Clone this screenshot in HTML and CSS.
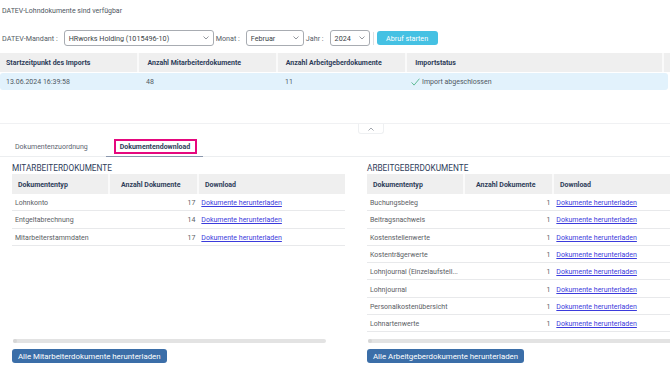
FILE: index.html
```html
<!DOCTYPE html>
<html lang="de">
<head>
<meta charset="utf-8">
<title>DATEV-Lohndokumente</title>
<link rel="stylesheet" href="styles.css">
</head>
<body>
<div class="page">
  <p class="notice">DATEV-Lohndokumente sind verfügbar</p>

  <div class="filters">
    <span class="label">DATEV-Mandant :</span>
    <div class="select select-mandant"><span>HRworks Holding (1015496-10)</span><svg class="chev" viewBox="0 0 6 4"><polyline points="0.5,0.5 3,3 5.5,0.5"/></svg></div>
    <span class="label">Monat :</span>
    <div class="select select-month"><span>Februar</span><svg class="chev" viewBox="0 0 6 4"><polyline points="0.5,0.5 3,3 5.5,0.5"/></svg></div>
    <span class="label">Jahr :</span>
    <div class="select select-year"><span>2024</span><svg class="chev" viewBox="0 0 6 4"><polyline points="0.5,0.5 3,3 5.5,0.5"/></svg></div>
    <span class="divider"></span>
    <button class="btn-fetch">Abruf starten</button>
  </div>

  <div class="import-table">
    <div class="import-row import-head">
      <div class="c c1">Startzeitpunkt des Imports</div>
      <div class="c c2">Anzahl Mitarbeiterdokumente</div>
      <div class="c c3">Anzahl Arbeitgeberdokumente</div>
      <div class="c c4">Importstatus</div>
      <div class="c c5"></div>
    </div>
    <div class="import-row import-data">
      <div class="c c1">13.06.2024 16:39:58</div>
      <div class="c c2">48</div>
      <div class="c c3">11</div>
      <div class="c c4"><svg class="check" viewBox="0 0 10 9"><polyline points="0.6,5 3.4,8 9.4,0.8"/></svg>Import abgeschlossen</div>
    </div>
  </div>

  <div class="collapse-bar">
    <span class="handle"><svg viewBox="0 0 6 4"><polyline points="0.5,3.5 3,1 5.5,3.5"/></svg></span>
  </div>

  <div class="tabs">
    <div class="tab">Dokumentenzuordnung</div>
    <div class="tab tab-active"><span class="focus">Dokumentendownload</span></div>
  </div>

  <div class="panels">
    <section class="panel">
      <h3 class="panel-title">MITARBEITERDOKUMENTE</h3>
      <div class="doc-table">
        <div class="doc-head">
          <div class="d1">Dokumententyp</div>
          <div class="d2">Anzahl Dokumente</div>
          <div class="d3">Download</div>
        </div>
        <div class="doc-body">
          <div class="doc-row"><div class="d1">Lohnkonto</div><div class="d2">17</div><div class="d3"><a href="#">Dokumente herunterladen</a></div></div>
          <div class="doc-row"><div class="d1">Entgeltabrechnung</div><div class="d2">14</div><div class="d3"><a href="#">Dokumente herunterladen</a></div></div>
          <div class="doc-row"><div class="d1">Mitarbeiterstammdaten</div><div class="d2">17</div><div class="d3"><a href="#">Dokumente herunterladen</a></div></div>
        </div>
      </div>
      <div class="scrollbar"><span class="thumb"></span></div>
      <button class="btn-all">Alle Mitarbeiterdokumente herunterladen</button>
    </section>

    <section class="panel">
      <h3 class="panel-title">ARBEITGEBERDOKUMENTE</h3>
      <div class="doc-table">
        <div class="doc-head">
          <div class="d1">Dokumententyp</div>
          <div class="d2">Anzahl Dokumente</div>
          <div class="d3">Download</div>
        </div>
        <div class="doc-body">
          <div class="doc-row"><div class="d1">Buchungsbeleg</div><div class="d2">1</div><div class="d3"><a href="#">Dokumente herunterladen</a></div></div>
          <div class="doc-row"><div class="d1">Beitragsnachweis</div><div class="d2">1</div><div class="d3"><a href="#">Dokumente herunterladen</a></div></div>
          <div class="doc-row"><div class="d1">Kostenstellenwerte</div><div class="d2">1</div><div class="d3"><a href="#">Dokumente herunterladen</a></div></div>
          <div class="doc-row"><div class="d1">Kostenträgerwerte</div><div class="d2">1</div><div class="d3"><a href="#">Dokumente herunterladen</a></div></div>
          <div class="doc-row"><div class="d1">Lohnjournal (Einzelaufstell...</div><div class="d2">1</div><div class="d3"><a href="#">Dokumente herunterladen</a></div></div>
          <div class="doc-row"><div class="d1">Lohnjournal</div><div class="d2">1</div><div class="d3"><a href="#">Dokumente herunterladen</a></div></div>
          <div class="doc-row"><div class="d1">Personalkostenübersicht</div><div class="d2">1</div><div class="d3"><a href="#">Dokumente herunterladen</a></div></div>
          <div class="doc-row"><div class="d1">Lohnartenwerte</div><div class="d2">1</div><div class="d3"><a href="#">Dokumente herunterladen</a></div></div>
        </div>
      </div>
      <div class="scrollbar"><span class="thumb"></span></div>
      <button class="btn-all">Alle Arbeitgeberdokumente herunterladen</button>
    </section>
  </div>
</div>
</body>
</html>
```

FILE: styles.css
```css
html, body {
  margin: 0;
  padding: 0;
  background: #ffffff;
  overflow: hidden;
}
body {
  width: 670px;
  height: 367px;
  font-family: Roboto, "Liberation Sans", sans-serif;
  font-size: 7px;
  color: #555a60;
}
.page {
  display: flex;
  flex-direction: column;
}

/* notice */
.notice {
  margin: 6px 0 0 2px;
  line-height: 10px;
  font-size: 7px;
  color: #4d5660;
}

/* filters */
.filters {
  display: flex;
  align-items: center;
  margin: 14px 0 0 2px;
  height: 16px;
}
.label {
  font-size: 7.2px;
  color: #555c66;
  margin-right: 6px;
}
.select {
  box-sizing: border-box;
  height: 16px;
  border: 1px solid #a8acb2;
  border-radius: 3px;
  display: flex;
  align-items: center;
  justify-content: space-between;
  padding: 0 4px 0 4px;
  font-size: 7.2px;
  color: #3a3f46;
  margin-right: 2px;
}
.select-mandant { width: 150px; }
.select-month { width: 58px; }
.select-year { width: 40px; }
.chev {
  width: 6px;
  height: 4px;
  fill: none;
  stroke: #7a7f86;
  stroke-width: 0.8;
}
.divider {
  width: 1px;
  height: 13px;
  background: #dcdfe3;
  margin: 0 3px 0 1px;
}
.btn-fetch {
  box-sizing: border-box;
  height: 14px;
  width: 61px;
  border: none;
  border-radius: 3px;
  background: #45c1e3;
  color: #ffffff;
  font-family: Roboto, "Liberation Sans", sans-serif;
  font-size: 7.2px;
  padding: 0;
}

/* import table */
.import-table {
  margin-top: 7px;
}
.import-row {
  display: flex;
}
.import-head {
  height: 19px;
  font-weight: 700;
  color: #2e3d5a;
}
.import-head .c {
  background: #efefef;
  border-left: 2px solid #fafafa;
}
.import-head .c1 { border-left: none; }
.c {
  box-sizing: border-box;
  display: flex;
  align-items: center;
  padding-left: 6px;
}
.c1 { width: 138px; }
.c2 { width: 139px; padding-left: 8px; }
.c3 { width: 130px; padding-left: 8px; }
.c4 { width: 258px; padding-left: 8px; }
.c5 { flex: 1; }
.import-data {
  margin-top: 1px;
  height: 17px;
  width: 668px;
  background: #e2f2fc;
  border-radius: 3px;
  color: #4f5862;
}
.import-data .c4 { padding-left: 4px; }
.check {
  width: 9px;
  height: 8px;
  margin-right: 2px;
  fill: none;
  stroke: #3fae7e;
  stroke-width: 0.9;
}

/* collapse bar */
.collapse-bar {
  margin-top: 33px;
  border-top: 1px solid #f0f1f3;
  display: flex;
  justify-content: center;
  padding-left: 72px;
}
.handle {
  box-sizing: border-box;
  width: 26px;
  height: 10px;
  border: 1px solid #eef0f2;
  border-top: none;
  border-radius: 0 0 3px 3px;
  display: flex;
  align-items: center;
  justify-content: center;
}
.handle svg {
  width: 6px;
  height: 4px;
  fill: none;
  stroke: #8a9099;
  stroke-width: 0.8;
}

/* tabs */
.tabs {
  display: flex;
  gap: 10px;
  margin-top: 3px;
  padding-left: 7px;
  border-bottom: 1px solid #eceef0;
  height: 19px;
}
.tab {
  box-sizing: border-box;
  height: 19px;
  padding: 1px 8px 0 8px;
  display: flex;
  align-items: center;
  font-size: 7px;
  color: #5c6470;
}
.tab-active {
  padding: 2px 6px 1px 8px;
  border-bottom: 1px solid #8a97ad;
  margin-bottom: -1px;
  height: 20px;
  align-items: stretch;
}
.focus {
  box-sizing: border-box;
  border: 2px solid #e5087e;
  padding: 1px 5px 0 4px;
  display: flex;
  align-items: center;
  font-weight: 700;
  color: #2e3d5a;
  height: 15px;
}

/* panels */
.panels {
  display: flex;
  gap: 22px;
  padding-left: 12px;
}
.panel {
  flex: 0 0 333px;
  width: 333px;
  display: flex;
  flex-direction: column;
}
.panel-title {
  margin: 6px 0 0 0;
  font-size: 8.25px;
  font-weight: 400;
  line-height: 10px;
  color: #2e3d5a;
}
.doc-table {
  margin-top: 1px;
}
.doc-head {
  display: flex;
  height: 20px;
  font-weight: 700;
  color: #2e3d5a;
}
.doc-head > div {
  box-sizing: border-box;
  background: #efefef;
  display: flex;
  align-items: center;
  border-left: 2px solid #fafafa;
  padding-top: 1px;
}
.doc-head .d1 { border-left: none; padding-left: 6px; }
.doc-head .d2 { padding-left: 11px; }
.doc-head .d3 { padding-left: 6px; }
.d1 { width: 96px; }
.d2 { width: 89px; }
.d3 { width: 148px; }
.doc-body {
  height: 142px;
}
.doc-row {
  box-sizing: border-box;
  display: flex;
  height: 17.3px;
  padding-top: 2px;
  border-bottom: 1px solid #e8e9eb;
  align-items: center;
  color: #5a5e64;
}
.doc-row .d1 {
  padding-left: 3px;
  white-space: nowrap;
  overflow: hidden;
}
.doc-row .d2 {
  box-sizing: border-box;
  text-align: right;
  padding-right: 3px;
}
.doc-row .d3 {
  box-sizing: border-box;
  padding-left: 3px;
}
.doc-row a {
  color: #3b3bdc;
  text-decoration: underline;
}
.scrollbar {
  margin-top: 3px;
  margin-left: 1px;
  width: calc(100% - 20px);
  height: 4px;
  border-radius: 2px;
  background: #e3e3e3;
  display: flex;
}
.thumb {
  width: 4px;
  height: 4px;
  border-radius: 2px;
  background: #d6d6d6;
}
.btn-all {
  align-self: flex-start;
  margin-top: 6px;
  height: 14px;
  padding: 0 6px;
  border: none;
  border-radius: 3px;
  background: #3b6ea8;
  color: #ffffff;
  font-family: Roboto, "Liberation Sans", sans-serif;
  font-size: 7.85px;
}
```
